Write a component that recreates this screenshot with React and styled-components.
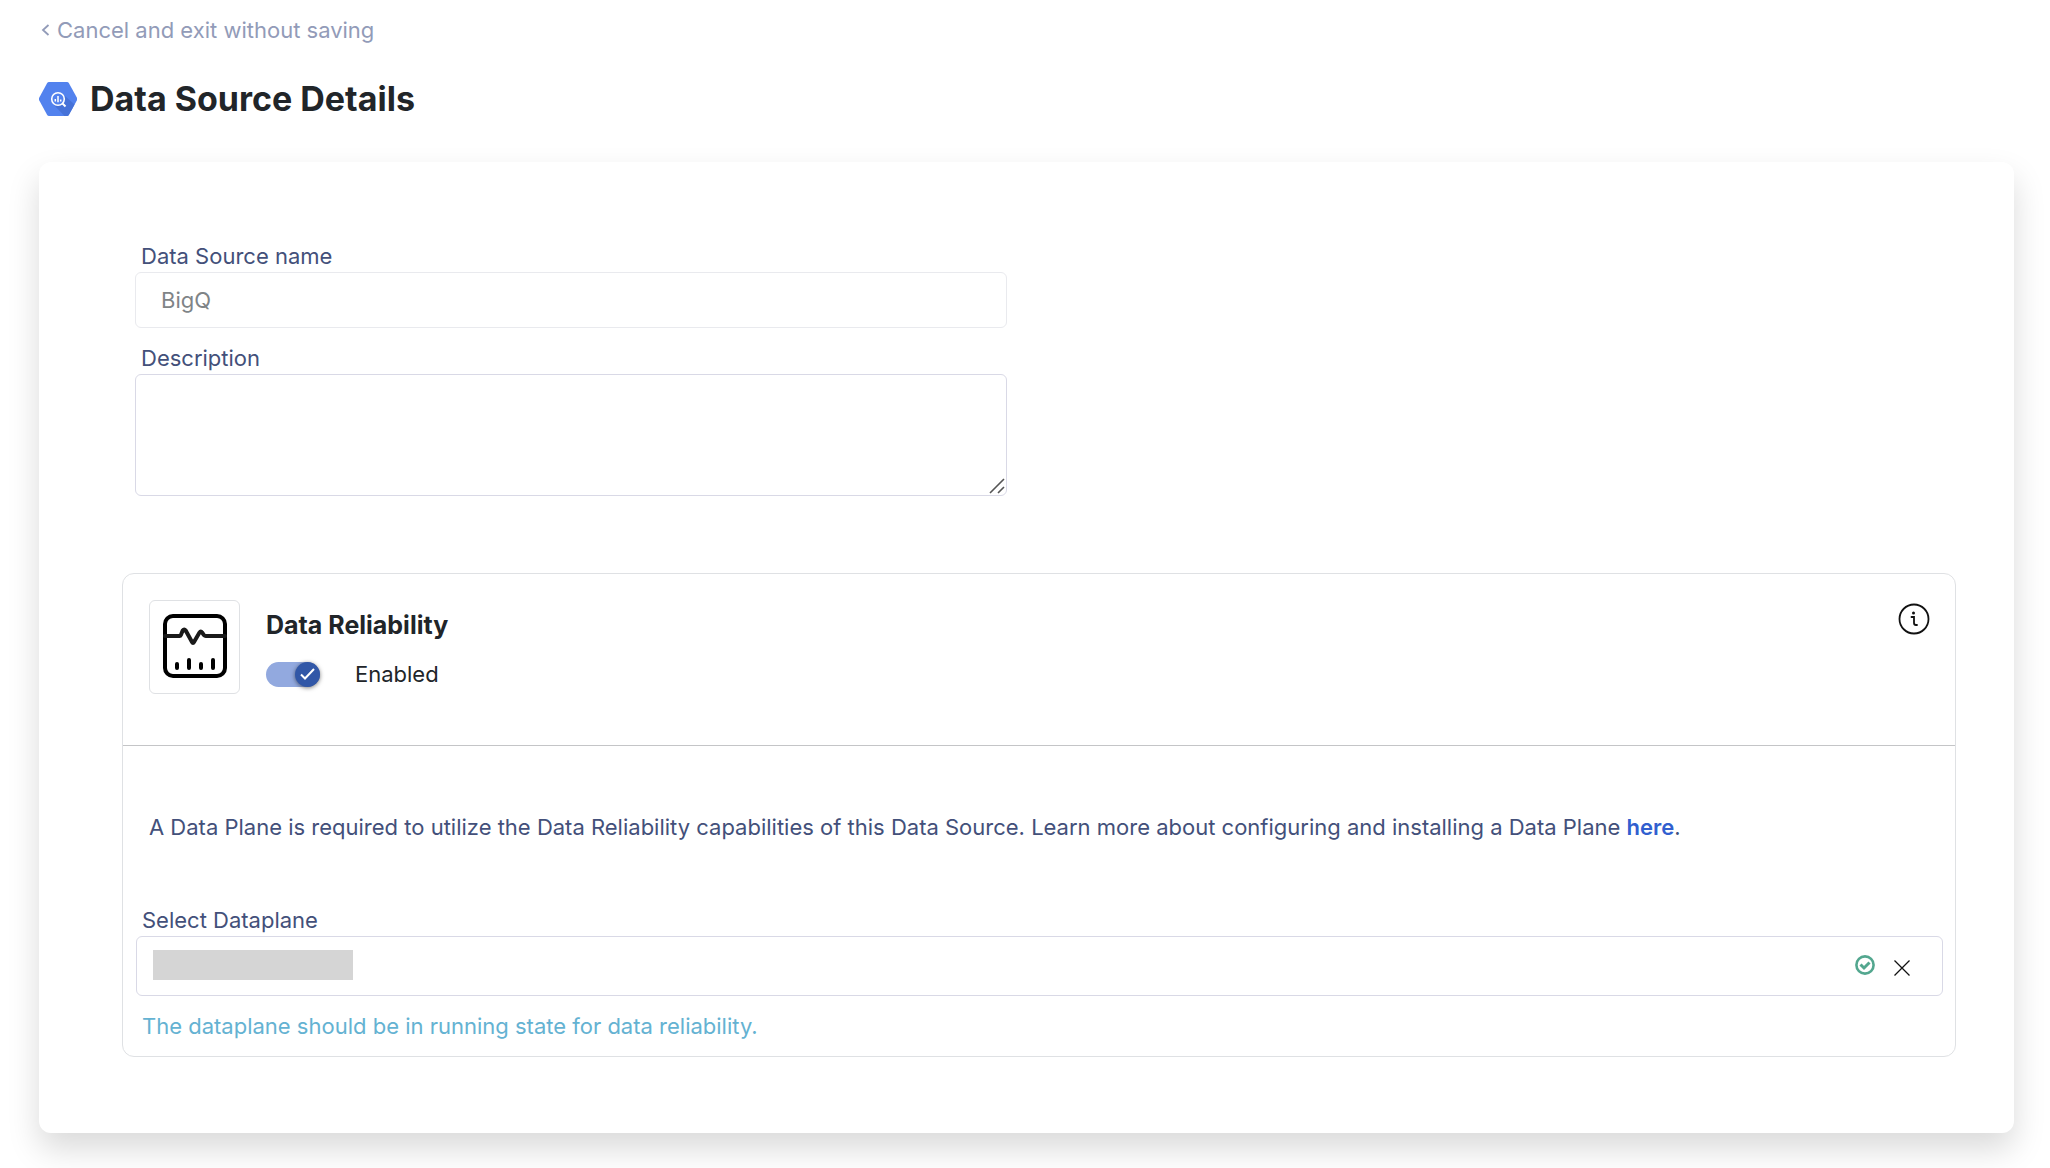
import { useState } from "react";
import styled, { createGlobalStyle } from "styled-components";

export default function App() {

    const [description, setDescription] = useState("");
    const [enabled, setEnabled] = useState(true);
    const [dataplane, setDataplane] = useState("selected");

    return (
        <>
            <GlobalStyle />
            <Page>
                <BackLink href="#">
                    <svg width="9" height="12" viewBox="0 0 9 12">
                        <path d="M7.500 1L2 6l5.500 5" fill="none" stroke="currentColor" strokeWidth="1.800" />
                    </svg>
                    Cancel and exit without saving
                </BackLink>
                <Heading>
                    <BigQueryLogo />
                    <h1>Data Source Details</h1>
                </Heading>

                <Card>
                    <Fields>
                        <Label htmlFor="name">Data Source name</Label>
                        <NameInput id="name" type="text" value="BigQ" disabled />
                        <Label htmlFor="description">Description</Label>
                        <TextBox>
                            <textarea
                                id="description"
                                value={description}
                                onChange={(e) => setDescription(e.target.value)}
                            />
                            <svg width="16" height="16" viewBox="0 0 16 16">
                                <path d="M1 15L15 1M9 15l6-6" stroke="#555" strokeWidth="1.600" />
                            </svg>
                        </TextBox>
                    </Fields>

                    <Panel>
                        <PanelHeader>
                            <IconBox>
                                <ReliabilityIcon />
                            </IconBox>
                            <PanelTitle>
                                <h2>Data Reliability</h2>
                                <SwitchLabel>
                                    <Switch $on={enabled}>
                                        <input
                                            type="checkbox"
                                            checked={enabled}
                                            onChange={(e) => setEnabled(e.target.checked)}
                                        />
                                        <Thumb>
                                            {enabled && (
                                                <svg width="15" height="12" viewBox="0 0 15 12">
                                                    <path d="M1 6.500l4 4L14 1" fill="none" stroke="#fff" strokeWidth="2" />
                                                </svg>
                                            )}
                                        </Thumb>
                                    </Switch>
                                    {enabled ? "Enabled" : "Disabled"}
                                </SwitchLabel>
                            </PanelTitle>
                            <IconButton type="button" aria-label="Information">
                                <InfoIcon />
                            </IconButton>
                        </PanelHeader>

                        <PanelBody>
                            <Notice>
                                A Data Plane is required to utilize the Data Reliability capabilities of this Data Source. Learn more about configuring and installing a Data Plane <a href="#">here</a>.
                            </Notice>
                            <Label htmlFor="dataplane">Select Dataplane</Label>
                            <SelectBox>
                                {dataplane && <HiddenValue />}
                                <select
                                    id="dataplane"
                                    value={dataplane}
                                    onChange={(e) => setDataplane(e.target.value)}
                                >
                                    <option value=""></option>
                                    <option value="selected"></option>
                                </select>
                                <RunningIcon />
                                <IconButton type="button" aria-label="Clear" onClick={() => setDataplane("")}>
                                    <svg width="16" height="16" viewBox="0 0 16 16">
                                        <path d="M0.500 0.500l15 15M15.500 0.500l-15 15" stroke="#111" strokeWidth="1.300" />
                                    </svg>
                                </IconButton>
                            </SelectBox>
                            <Hint>The dataplane should be in running state for data reliability.</Hint>
                        </PanelBody>
                    </Panel>
                </Card>
            </Page>
        </>
    )
}

function BigQueryLogo() {
    return (
        <svg width="38" height="34" viewBox="0 0 38 34">
            <path d="M10 0h18q1.200 0 1.800 1l8 14.500q.7 1.500 0 3L29.800 33q-.6 1-1.800 1H10q-1.200 0-1.800-1L.3 18.500q-.7-1.500 0-3L8.200 1Q8.800 0 10 0z" fill="#5282ee" />
            <path d="M26 14l9.600 8.500L29.800 33q-.6 1-1.800 1h-2.500L14 22z" fill="#4672d8" />
            <circle cx="19" cy="17" r="6.300" fill="#5282ee" stroke="#fff" strokeWidth="1.600" />
            <path d="M23.500 21.500l3 3" stroke="#fff" strokeWidth="2" />
            <path d="M16.300 17v2.500M19 14v6.300M21.700 17.500v2" stroke="#fff" strokeWidth="1.500" />
        </svg>
    )
}

function ReliabilityIcon() {
    return (
        <svg width="64" height="64" viewBox="0 0 64 64" fill="none" stroke="#000" strokeWidth="4" strokeLinecap="round" strokeLinejoin="round">
            <rect x="2" y="2" width="60" height="60" rx="8" />
            <path d="M2 22h14.500q1 0 1.400-1l1.800-4.500q1.500-2 3 0L29 28q1 2 2 0l5.500-9.500q1.300-2 2.600 0l2 2.800q.6.700 1.600.7H62" stroke="#1a1a1a" />
            <path d="M14 50v4M26 46v8M38 50v4M50 46v8" />
        </svg>
    )
}

function InfoIcon() {
    return (
        <svg width="32" height="32" viewBox="0 0 32 32" fill="none" stroke="#111" strokeWidth="1.800">
            <circle cx="16" cy="16" r="14.500" />
            <circle cx="15.500" cy="10" r="1.500" fill="#111" stroke="none" />
            <path d="M13.500 14H16v6q0 2 2 2h1" strokeLinecap="round" />
        </svg>
    )
}

function RunningIcon() {
    return (
        <svg width="20" height="20" viewBox="0 0 20 20" fill="none" stroke="#53a78f">
            <circle cx="10" cy="10" r="8.600" strokeWidth="2.600" />
            <path d="M5.500 9.500l3.500 3.500 5.500-5.500" strokeWidth="3" />
        </svg>
    )
}

const GlobalStyle = createGlobalStyle`
    *{
        box-sizing: border-box;
    }

    body{
        margin: 0;
        background: #fff;
        color: #212529;
        font-family: Inter, "Liberation Sans", sans-serif;
        font-size: 22px;
        line-height: 32px;
    }

    h1, h2, p{
        margin: 0;
    }

    svg{
        display: block;
        flex-shrink: 0;
    }

    input, textarea, select, button{
        font: inherit;
    }
`

const Page = styled.main`
    padding: 14px 36px 35px 39px;
`

const BackLink = styled.a`
    display: flex;
    width: fit-content;
    align-items: center;
    gap: 7px;
    padding-left: 2px;
    color: #929bb8;
    text-decoration: none;
`

const Heading = styled.header`
    display: flex;
    align-items: center;
    gap: 13px;
    margin-top: 33px;

    h1{
        font-size: 34px;
        line-height: 40px;
        font-weight: 700;
    }
`

const Card = styled.section`
    margin-top: 43px;
    padding: 78px 58px 76px 83px;
    border-radius: 12px;
    background: #fff;
    box-shadow: 0 16px 32px rgba(0, 0, 0, 0.15);
`

const Fields = styled.div`
    display: flex;
    flex-direction: column;
    width: 50%;
    padding: 0 32px 0 13px;
`

const Label = styled.label`
    display: block;
    padding-left: 6px;
    color: #43507a;
`

const NameInput = styled.input`
    width: 100%;
    height: 56px;
    margin-bottom: 14px;
    padding: 0 25px;
    border: 1px solid #e9eaee;
    border-radius: 6px;
    background: #fff;
    color: #7f8487;
`

const TextBox = styled.div`
    position: relative;

    textarea{
        display: block;
        width: 100%;
        height: 122px;
        padding: 12px 25px;
        border: 1px solid #d9d9e6;
        border-radius: 6px;
        resize: none;
    }

    svg{
        position: absolute;
        right: 2px;
        bottom: 2px;
        pointer-events: none;
    }
`

const Panel = styled.section`
    margin-top: 77px;
    border: 1px solid #dfe1e4;
    border-radius: 12px;
`

const PanelHeader = styled.div`
    display: flex;
    align-items: flex-start;
    height: 172px;
    padding: 26px 25px 0 26px;
    border-bottom: 1px solid #c4c5c7;
`

const IconBox = styled.div`
    display: flex;
    justify-content: center;
    padding: 13px 0;
    width: 91px;
    height: 94px;
    border: 1px solid #dfe1e4;
    border-radius: 6px;
`

const PanelTitle = styled.div`
    flex: 1;
    padding: 9px 0 0 26px;

    h2{
        font-size: 25px;
        line-height: 32px;
        font-weight: 700;
    }
`

const SwitchLabel = styled.label`
    display: flex;
    width: fit-content;
    align-items: center;
    gap: 35px;
    margin-top: 17px;
`

const Switch = styled.span`
    display: flex;
    justify-content: ${(props) => props.$on ? "flex-end" : "flex-start"};
    width: 54px;
    height: 25px;
    border-radius: 13px;
    background: ${(props) => props.$on ? "#92a9df" : "#c4c5c7"};

    input{
        appearance: none;
        width: 0;
        margin: 0;
    }
`

const Thumb = styled.span`
    display: flex;
    align-items: center;
    justify-content: center;
    width: 25px;
    height: 25px;
    border-radius: 50%;
    background: #3157a7;
    box-shadow: 0 1px 4px rgba(0, 0, 0, 0.5);
`

const IconButton = styled.button`
    display: flex;
    padding: 3px 0 0;
    border: none;
    background: none;
    cursor: pointer;
`

const PanelBody = styled.div`
    padding: 65px 12px 14px 13px;
`

const Notice = styled.p`
    margin-bottom: 61px;
    padding-left: 13px;
    color: #43507a;

    a{
        color: #315fcf;
        font-weight: 600;
        text-decoration: none;
    }
`

const SelectBox = styled.div`
    display: flex;
    align-items: center;
    height: 60px;
    margin-bottom: 14px;
    padding: 0 32px 3px 16px;
    border: 1px solid #d9d9e6;
    border-radius: 6px;

    select{
        flex: 1;
        height: 100%;
        appearance: none;
        border: none;
        background: none;
        outline: none;
    }

    ${IconButton}{
        margin-left: 19px;
        padding-top: 6px;
    }
`

const HiddenValue = styled.span`
    width: 200px;
    height: 30px;
    background: #d5d5d5;
`

const Hint = styled.p`
    padding-left: 6px;
    color: #64b2d2;
`
